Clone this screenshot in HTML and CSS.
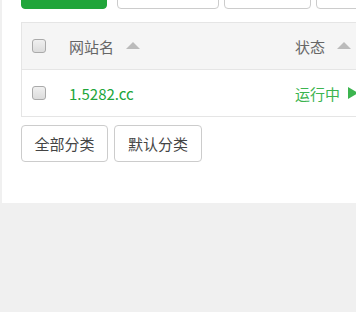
FILE: index.html
```html
<!DOCTYPE html>
<html lang="zh-CN">
<head>
<meta charset="utf-8">
<link rel="stylesheet" href="styles.css">
</head>
<body>
<div class="panel">
  <div class="toolbar">
    <button class="btn btn-green" aria-label="添加站点"></button>
    <button class="btn btn-wide" aria-label="修改默认页"></button>
    <button class="btn btn-mid" aria-label="默认站点"></button>
    <button class="btn btn-mid" aria-label="PHP命令行"></button>
  </div>
  <div class="table">
    <div class="row head">
      <div class="cell check"><span class="box"></span></div>
      <div class="cell name">网站名<span class="sort"></span></div>
      <div class="cell status">状态<span class="sort"></span></div>
    </div>
    <div class="row">
      <div class="cell check"><span class="box"></span></div>
      <div class="cell name"><a class="link">1.5282.cc</a></div>
      <div class="cell status"><a class="run">运行中<span class="play"></span></a></div>
    </div>
  </div>
  <div class="cats">
    <button class="btn cat">全部分类</button>
    <button class="btn cat">默认分类</button>
  </div>
</div>
</body>
</html>
```

FILE: styles.css
```css
html, body {
  margin: 0;
  background: #f0f0f0;
  overflow: hidden;
}
body {
  font-family: "Noto Sans CJK SC", "Microsoft YaHei", sans-serif;
  font-size: 15px;
  color: #555;
}
.panel {
  margin-left: 2px;
  background: #fff;
  padding: 0 0 41px 19px;
  overflow: hidden;
  height: 162px;
}
.toolbar {
  display: flex;
  margin-top: -27px;
  white-space: nowrap;
}
.btn {
  font-family: inherit;
  font-size: 15px;
  height: 36px;
  border: 1px solid #ccc;
  border-radius: 4px;
  background: #fff;
  color: #555;
  padding: 0;
  flex: none;
}
.btn-green {
  width: 86px;
  background: #20a53a;
  border-color: #20a53a;
  color: #fff;
  margin-right: 10px;
}
.btn-wide { width: 102px; margin-right: 5px; }
.btn-mid { width: 87px; margin-right: 5px; }
.table {
  margin-top: 13px;
  width: 460px;
  border: 1px solid #e5e5e5;
}
.row {
  display: flex;
  align-items: center;
  height: 46px;
}
.row.head {
  background: #f5f5f5;
  border-bottom: 1px solid #e5e5e5;
}
.cell { display: flex; align-items: center; box-sizing: border-box; }
.check { width: 47px; padding-left: 10px; }
.box {
  width: 12px;
  height: 12px;
  border: 1px solid #aaa;
  border-radius: 3px;
  background: linear-gradient(#f0f0f0, #dcdcdc);
}
.name { width: 226px; color: #666; }
.status { color: #666; }
.sort {
  width: 0;
  height: 0;
  border-left: 7px solid transparent;
  border-right: 7px solid transparent;
  border-bottom: 7px solid #bbb;
  margin-left: 12px;
  margin-top: -1px;
}
.link { color: #20a53a; }
.run { color: #3cb44f; display: flex; align-items: center; }
.play {
  width: 0;
  height: 0;
  border-top: 6px solid transparent;
  border-bottom: 6px solid transparent;
  border-left: 10px solid #3cb44f;
  margin-left: 8px;
}
.cats {
  display: flex;
  gap: 6px;
  margin-top: 8px;
}
.cat { width: 87px; height: 37px; color: #444; }
.cat + .cat { width: 88px; }
```
